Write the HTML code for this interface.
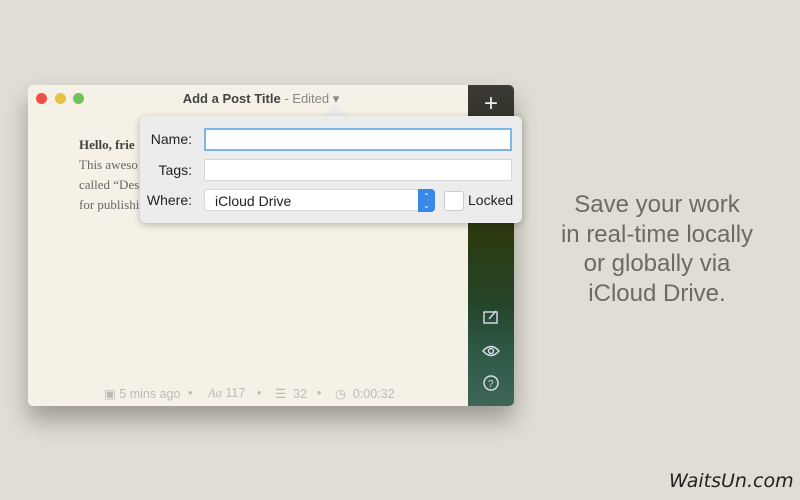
<!DOCTYPE html>
<html><head><style>
body{margin:0;width:800px;height:500px;background:#e0ddd4;position:relative;overflow:hidden;font-family:"Liberation Sans",sans-serif}
.win{position:absolute;left:28px;top:85px;width:486px;height:321px;background:#f5f1e6;border-radius:5px;box-shadow:0 14px 24px rgba(0,0,0,.3);overflow:hidden}
.dot{position:absolute;top:8px;width:11px;height:11px;border-radius:50%}
.side{position:absolute;right:0;top:0;width:46px;height:321px;background:linear-gradient(#3b3a35 0,#35352c 25px,#2d3a0c 100px,#2b3a10 150px,#24452a 220px,#2f5a48 270px,#3e6656 321px)}
.title{position:absolute;left:0;width:466px;top:6px;text-align:center;font-size:13px;color:#444;font-weight:bold}
.title span{font-weight:normal;color:#888}
.body{position:absolute;left:51px;top:50px;font-family:"Liberation Serif",serif;font-size:13px;color:#666;line-height:20px}
.pop{position:absolute;left:140px;top:116px;width:382px;height:107px;background:#ececec;border-radius:6px;box-shadow:0 2px 8px rgba(0,0,0,.25)}
.arrow{position:absolute;left:322px;top:103px;width:0;height:0;border-left:13px solid transparent;border-right:13px solid transparent;border-bottom:14px solid #ececec}
.lbl{position:absolute;font-size:14px;color:#222;text-align:right;width:52px;left:0}
.fld{position:absolute;left:64px;width:308px;height:22px;background:#fff;border:1px solid #d8d8d8;box-sizing:border-box}
.foot{position:absolute;top:301px;left:76px;font-size:12.5px;color:#bbb;white-space:nowrap}
.foot span{position:absolute;top:0}
.right{position:absolute;left:540px;top:190px;width:234px;text-align:center;font-size:24px;line-height:29.5px;color:#6d6a64}
</style></head><body>
<div class="win">
<div class="dot" style="left:8px;background:#ee5048"></div>
<div class="dot" style="left:27px;background:#e5c33e"></div>
<div class="dot" style="left:45px;background:#70c35a"></div>
<div class="title">Add a Post Title <span>- Edited ▾</span></div>
<div class="body"><b style="color:#444">Hello, frie</b><br>This aweso<br>called “Desl<br>for publishi</div>
<div class="foot">
<span style="left:0">▣ 5 mins ago</span>
<span style="left:84px">•</span>
<span style="left:104px"><i style="font-family:'Liberation Serif'">Aa</i> 117</span>
<span style="left:153px">•</span>
<span style="left:171px">☰ &nbsp;32</span>
<span style="left:213px">•</span>
<span style="left:231px">◷ &nbsp;0:00:32</span>
</div>
<div class="side">
<div style="position:absolute;left:0;width:46px;top:5px;text-align:center;color:#eee;font-size:24px;font-weight:300">+</div>
<svg style="position:absolute;left:14px;top:224px" width="18" height="16" fill="none" stroke="#dde" stroke-width="1.4"><rect x="2" y="3" width="13" height="11"/><path d="M7 10l7-8"/></svg>
<svg style="position:absolute;left:13px;top:259px" width="20" height="14" fill="none" stroke="#dde" stroke-width="1.4"><path d="M2 7q8-9 16 0q-8 9-16 0z"/><circle cx="10" cy="7" r="2.5"/></svg>
<svg style="position:absolute;left:14px;top:289px" width="18" height="18" fill="none" stroke="#dde" stroke-width="1.4"><circle cx="9" cy="9" r="7"/><text x="6" y="13" font-size="10" fill="#dde" stroke="none" font-family="Liberation Sans">?</text></svg>
</div>
</div>
<div class="arrow"></div>
<div class="pop">
<div class="lbl" style="top:15px">Name:</div>
<div class="fld" style="top:12px;border:2px solid #7fb6ea;height:23px"></div>
<div class="lbl" style="top:46px">Tags:</div>
<div class="fld" style="top:43px"></div>
<div class="lbl" style="top:76px">Where:</div>
<div class="fld" style="top:73px;width:231px;border-radius:4px;font-size:14px;padding:3px 0 0 10px;color:#222">iCloud Drive</div>
<div style="position:absolute;left:278px;top:73px;width:17px;height:23px;background:#3a87e8;border-radius:0 4px 4px 0;color:#fff;font-size:8px;text-align:center;line-height:9px;padding-top:3px;box-sizing:border-box">⌃<br>⌄</div>
<div style="position:absolute;left:304px;top:75px;width:18px;height:18px;background:#fff;border:1px solid #ccc;border-radius:3px"></div>
<div style="position:absolute;left:328px;top:76px;font-size:14px;color:#222">Locked</div>
</div>
<div class="right">Save your work<br>in real-time locally<br>or globally via<br>iCloud Drive.</div>
<div style="position:absolute;left:669px;top:470px;font-size:19px;font-style:italic;color:#222;font-family:'DejaVu Sans',sans-serif">WaitsUn.com</div>
</body></html>
